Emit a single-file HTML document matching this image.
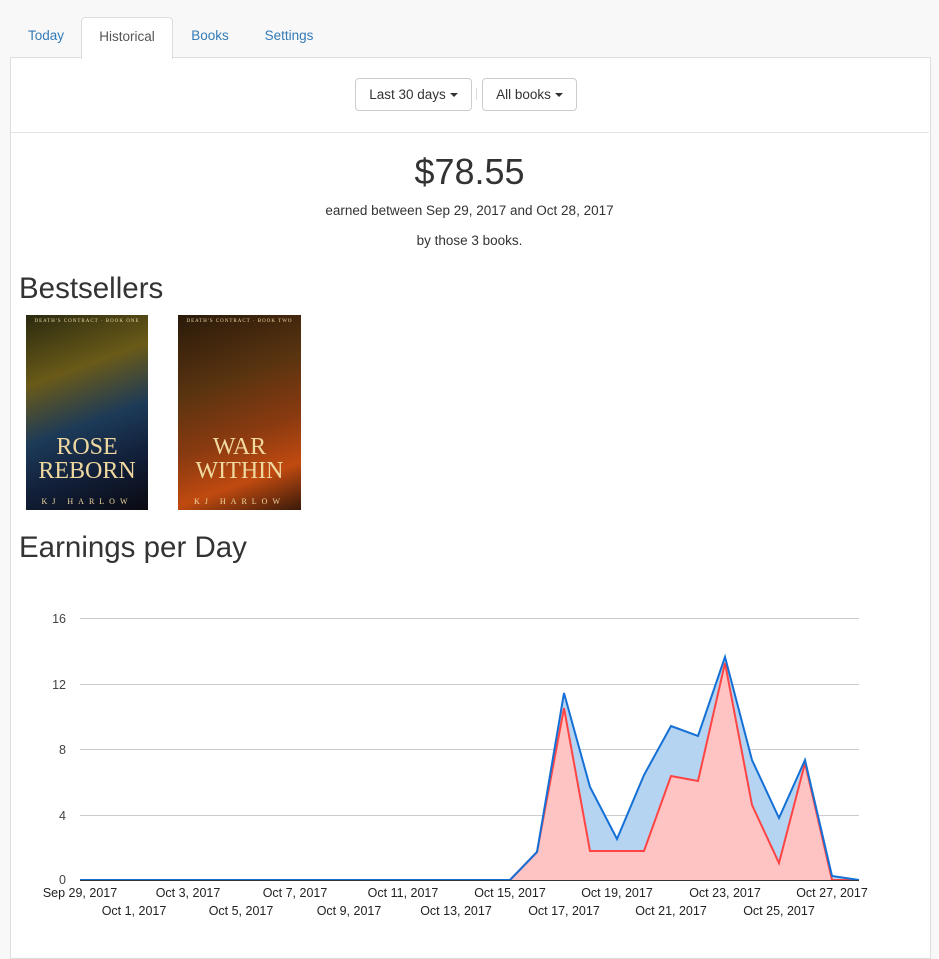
<!DOCTYPE html>
<html><head><style>
body{margin:0;background:#f8f8f8;font-family:"Liberation Sans",Arial,sans-serif;color:#333;width:939px;height:935px;overflow:hidden;position:relative}
.tab{position:absolute;top:17px;height:40px;line-height:38px;font-size:13.5px;color:#337ab7}
.panel{position:absolute;left:10px;top:57px;width:919px;height:900px;background:#fff;border:1px solid #ddd}
.btn{position:absolute;top:78px;height:33px;line-height:31px;border:1px solid #ccc;border-radius:4px;background:#fff;font-size:13.5px;color:#333;text-align:center;box-sizing:border-box}
.caret{display:inline-block;width:0;height:0;border-left:4px solid transparent;border-right:4px solid transparent;border-top:4px solid #333;vertical-align:middle;margin-left:4px}
h2{position:absolute;left:19px;margin:0;font-weight:400;font-size:29px;color:#333}
</style></head><body>
<div class="panel"></div>
<div class="tab" style="left:12px;width:68px;text-align:center">Today</div>
<div class="tab" style="left:81px;width:90px;text-align:center;background:#fff;border:1px solid #ddd;border-bottom:none;border-radius:4px 4px 0 0;color:#555;height:41px">Historical</div>
<div class="tab" style="left:176px;width:68px;text-align:center">Books</div>
<div class="tab" style="left:252px;width:74px;text-align:center">Settings</div>
<div class="btn" style="left:355px;width:117px">Last 30 days<span class="caret"></span></div>
<div style="position:absolute;left:476px;top:88px;width:1px;height:12px;background:#ddd"></div>
<div class="btn" style="left:482px;width:95px">All books<span class="caret"></span></div>
<div style="position:absolute;left:11px;top:132px;width:918px;height:1px;background:#e5e5e5"></div>
<div style="position:absolute;left:0;width:939px;top:151px;text-align:center;font-size:36px">$78.55</div>
<div style="position:absolute;left:0;width:939px;top:203px;text-align:center;font-size:13.5px">earned between Sep 29, 2017 and Oct 28, 2017</div>
<div style="position:absolute;left:0;width:939px;top:233px;text-align:center;font-size:13.5px">by those 3 books.</div>
<h2 style="top:272px;font-size:29.5px">Bestsellers</h2>
<div style="position:absolute;left:26px;top:315px;width:122px;height:195px;background:linear-gradient(160deg,#2a2a10 0%,#6a5a18 30%,#1c3a58 55%,#12203a 75%,#0a0a12 100%);color:#f0d9a0;text-align:center;font-family:'Liberation Serif',serif">
<div style="font-size:5px;margin-top:4px;letter-spacing:1px">DEATH'S CONTRACT · BOOK ONE</div>
<div style="position:absolute;top:120px;width:100%;font-size:24px;line-height:24px">ROSE<br>REBORN</div>
<div style="position:absolute;bottom:4px;width:100%;font-size:8px;letter-spacing:5px">KJ HARLOW</div></div>
<div style="position:absolute;left:178px;top:315px;width:123px;height:195px;background:linear-gradient(160deg,#2a1a0a 0%,#5a3410 35%,#8a3a10 60%,#c04a10 80%,#3a1a0a 100%);color:#f0d9a0;text-align:center;font-family:'Liberation Serif',serif">
<div style="font-size:5px;margin-top:4px;letter-spacing:1px">DEATH'S CONTRACT · BOOK TWO</div>
<div style="position:absolute;top:120px;width:100%;font-size:24px;line-height:24px">WAR<br>WITHIN</div>
<div style="position:absolute;bottom:4px;width:100%;font-size:8px;letter-spacing:5px">KJ HARLOW</div></div>
<h2 style="top:531px;font-size:29.5px">Earnings per Day</h2>
<svg style="position:absolute;left:0;top:0" width="939" height="935" font-family="Liberation Sans,Arial,sans-serif" font-size="12.5" fill="#444">
<g stroke="#ccc" stroke-width="1"><line x1="80" x2="859" y1="618.5" y2="618.5"/><line x1="80" x2="859" y1="684.5" y2="684.5"/><line x1="80" x2="859" y1="749.5" y2="749.5"/><line x1="80" x2="859" y1="815.5" y2="815.5"/></g>
<g text-anchor="end"><text x="66" y="623">16</text><text x="66" y="689">12</text><text x="66" y="754">8</text><text x="66" y="820">4</text><text x="66" y="884">0</text></g>
<polygon fill="#b4d4f2" points="80,880 510,880 537,852 564,693 590,787 617,839 644,775 671,726 698,736 725,657 752,760 779,818 805,760 832,876 859,880"/>
<polygon fill="#fec4c4" points="80,880 510,880 537,852 564,708 590,851 617,851 644,851 671,776 698,781 725,663 752,805 779,863 805,763 832,880 859,880"/>
<polyline fill="none" stroke="#f44" stroke-width="2" points="510,880 537,852 564,708 590,851 617,851 644,851 671,776 698,781 725,663 752,805 779,863 805,763 832,880 859,880"/>
<polyline fill="none" stroke="#1570d6" stroke-width="2" points="80,880 510,880 537,852 564,693 590,787 617,839 644,775 671,726 698,736 725,657 752,760 779,818 805,760 832,876 859,880"/>
<line x1="80" x2="859" y1="880.5" y2="880.5" stroke="#333"/>
<g text-anchor="middle" fill="#222">
<text x="80" y="897">Sep 29, 2017</text><text x="188" y="897">Oct 3, 2017</text><text x="295" y="897">Oct 7, 2017</text><text x="403" y="897">Oct 11, 2017</text><text x="510" y="897">Oct 15, 2017</text><text x="617" y="897">Oct 19, 2017</text><text x="725" y="897">Oct 23, 2017</text><text x="832" y="897">Oct 27, 2017</text>
<text x="134" y="915">Oct 1, 2017</text><text x="241" y="915">Oct 5, 2017</text><text x="349" y="915">Oct 9, 2017</text><text x="456" y="915">Oct 13, 2017</text><text x="564" y="915">Oct 17, 2017</text><text x="671" y="915">Oct 21, 2017</text><text x="779" y="915">Oct 25, 2017</text>
</g></svg>
</body></html>
